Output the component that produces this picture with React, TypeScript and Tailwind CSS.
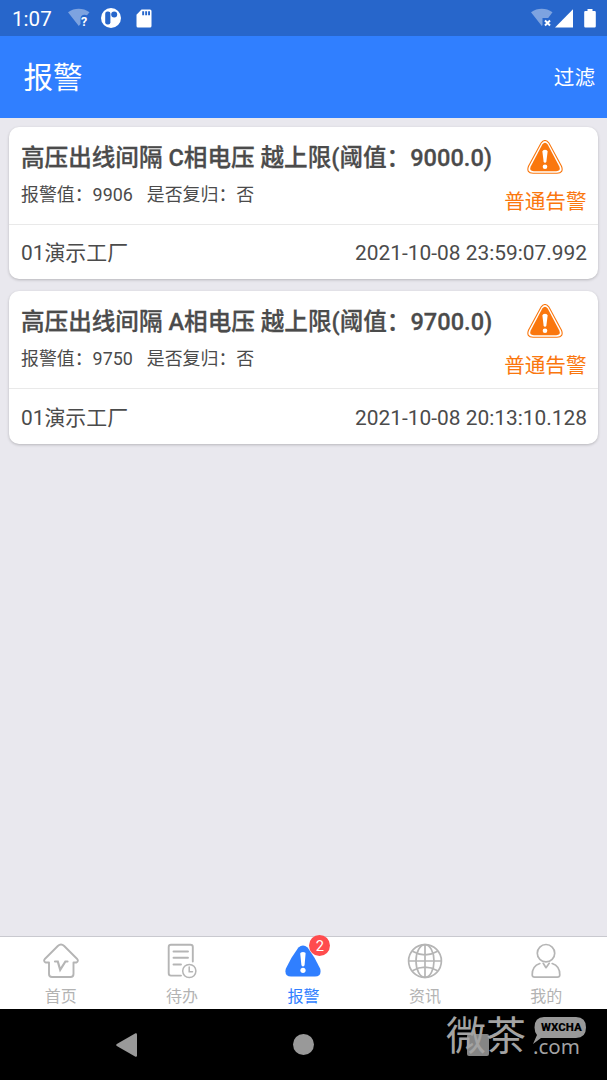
import clsx from "clsx";
import type { ReactNode } from "react";

const alarms = [
  {
    title: "高压出线间隔 C相电压 越上限(阈值：9000.0)",
    value: "9906",
    recovered: "否",
    level: "普通告警",
    site: "01演示工厂",
    time: "2021-10-08 23:59:07.992",
  },
  {
    title: "高压出线间隔 A相电压 越上限(阈值：9700.0)",
    value: "9750",
    recovered: "否",
    level: "普通告警",
    site: "01演示工厂",
    time: "2021-10-08 20:13:10.128",
  },
];

function StatusBar() {
  return (
    <div className="flex h-[36px] shrink-0 items-center bg-[#2766cb] pl-3 pr-[11px] text-white">
      <span className="w-[56px] pt-px text-[20.6px] leading-9">1:07</span>
      <svg className="h-[20px] w-[22px]" viewBox="0 0 22 20">
        <path d="M0 4.2C6.5-.4 15-.4 21.5 4.2L19 7.2Q13 5.5 12.5 11V16L10.8 18Z" fill="#7da3e0" />
        <text x="13" y="17.5" fontSize="12.5" fontWeight="700" fill="#fff">?</text>
      </svg>
      <svg className="ml-[11px] h-[20px] w-[20px]" viewBox="0 0 20 20">
        <circle cx="10" cy="10" r="10" fill="#fff" />
        <rect x="4.2" y="3.6" width="5.2" height="12.8" rx="2.2" fill="#2766cb" />
        <circle cx="13.2" cy="6.6" r="3" fill="#2766cb" />
      </svg>
      <svg className="ml-[15px] h-[19px] w-[16px]" viewBox="0 0 16 19">
        <path d="M5.5.5H14Q15.5.5 15.5 2V17Q15.5 18.5 14 18.5H2Q.5 18.5.5 17V5.7Z" fill="#fff" />
        <path d="M6.2 2.2h1.9v4H6.2zM9.2 2.2h1.9v4H9.2zM12.1 2.2H14v4h-1.9z" fill="#2766cb" />
      </svg>
      <div className="ml-auto flex items-center">
        <svg className="h-[20px] w-[22px]" viewBox="0 0 22 20">
          <path d="M0 4.2C6.5-.4 15-.4 21.5 4.2L17.2 10H11.5V17L10.8 18Z" fill="#7da3e0" />
          <path d="M14 12.5l5 5M19 12.5l-5 5" stroke="#fff" strokeWidth="2" />
        </svg>
        <svg className="ml-[2px] h-[19px] w-[18px]" viewBox="0 0 18 19">
          <path d="M18 .3V18.5H0Z" fill="#fff" />
        </svg>
        <svg className="ml-[11px] h-[19px] w-[12px]" viewBox="0 0 12 19">
          <path d="M3.5 0h5v2H10.7Q11.8 2 11.8 3.2V17.3Q11.8 18.6 10.6 18.6H1.4Q.2 18.6.2 17.3V3.2Q.2 2 1.4 2H3.5Z" fill="#fff" />
        </svg>
      </div>
    </div>
  );
}

function WarningIcon() {
  return (
    <svg className="h-[34px] w-[36px]" viewBox="0 0 36 34">
      <path d="M14.2 2.8Q18-1.8 21.8 2.8L34.5 26.2Q37 33 30 33.3H6Q-1 33 1.5 26.2Z" fill="#fff" stroke="#fa770e" strokeWidth="1.1" />
      <path d="M15.3 4.6Q18 1 20.7 4.6L32.3 26.6Q34.2 31.1 29.2 31.3H6.8Q1.8 31.1 3.7 26.6Z" fill="#fa770e" />
      <path d="M15.4 11.6Q15.5 9.8 18 9.8T20.6 11.6L19.4 21.5Q19.2 22.8 18 22.8T16.6 21.5Z" fill="#fff" />
      <circle cx="18" cy="26.7" r="2.3" fill="#fff" />
    </svg>
  );
}

function AlarmCard({ alarm }: { alarm: (typeof alarms)[number] }) {
  return (
    <section className="h-[152.4px] rounded-[10px] bg-white text-[#4b4b4b] shadow-[0_1px_3px_rgba(0,0,0,0.22)]">
      <div className="flex h-[97.6px] justify-between border-b border-[#e9e9e9] pl-[12px] pr-[11.5px]">
        <div className="whitespace-nowrap pt-[17px]">
          <h2 className="text-[23.6px] font-medium leading-[28px] [-webkit-text-stroke:0.3px_#4b4b4b]">{alarm.title}</h2>
          <p className="mt-[10px] flex gap-[14px] text-[17.9px] leading-[26px]">
            <span>报警值：{alarm.value}</span>
            <span>是否复归：{alarm.recovered}</span>
          </p>
        </div>
        <div className="flex flex-col items-center pt-[13px]">
          <WarningIcon />
          <span className="mt-[13.5px] text-[20.6px] leading-[28px] text-[#fa770e]">{alarm.level}</span>
        </div>
      </div>
      <div className="flex h-[55px] items-center justify-between pl-[12px] pr-[11px] pt-[4px] text-[20.9px]">
        <span>{alarm.site}</span>
        <span>{alarm.time}</span>
      </div>
    </section>
  );
}

function HomeIcon() {
  return (
    <svg className="h-[36px] w-[36px]" viewBox="0 0 36 36" fill="none" stroke="#b5b5b5" strokeWidth="1.9" strokeLinejoin="round" strokeLinecap="round">
      <path d="M6 19.5H2.5Q.2 18 1.8 16L14.8 3Q18-.2 21.2 3L34.2 16Q35.8 18 33.5 19.5H30.5V31Q30.5 34 27.5 34H9Q6 34 6 31Z" />
      <path d="M12 18.5H14.8L17.2 26.8L22.4 18.5H24.5" strokeWidth="2.2" strokeLinejoin="miter" />
    </svg>
  );
}

function TodoIcon() {
  return (
    <svg className="h-[36px] w-[36px]" viewBox="0 0 36 36" fill="none" stroke="#b5b5b5" strokeWidth="1.9" strokeLinecap="round">
      <path d="M17 32.6H7Q4.7 32.6 4.7 30.3V4Q4.7 1.7 7 1.7H26.5Q28.8 1.7 28.8 4V18.5M9.5 8.5H24M9.5 14.7H24M9.5 21.5H17" />
      <circle cx="25.3" cy="28" r="6.6" strokeWidth="1.5" />
      <path d="M25.2 24V28.8H28.5" strokeWidth="1.5" />
    </svg>
  );
}

function AlarmIcon() {
  return (
    <svg className="h-[36px] w-[36px]" viewBox="0 0 36 36">
      <path d="M13.4 4.6Q18 .2 22.6 4.6Q30 14.5 35.2 25.7Q37 33.2 30 33.5H6Q-1 33.2.8 25.7Q6 14.5 13.4 4.6Z" fill="#307fff" />
      <path d="M15.2 10.6Q15.2 8.9 18 8.9T20.6 10.6L19.6 22Q19.4 23.4 18 23.4T16.4 22Z" fill="#fff" />
      <circle cx="18" cy="27.3" r="2.6" fill="#fff" />
    </svg>
  );
}

function NewsIcon() {
  return (
    <svg className="h-[36px] w-[36px]" viewBox="0 0 36 36" fill="none" stroke="#b5b5b5" strokeWidth="1.7">
      <circle cx="18" cy="18" r="16.4" />
      <ellipse cx="18" cy="18" rx="9" ry="16.4" />
      <path d="M18 1.6V34.4M1.6 18H34.4M5.4 8.2Q18 15.4 30.6 8.2M5.4 27.8Q18 20.6 30.6 27.8" />
    </svg>
  );
}

function MineIcon() {
  return (
    <svg className="h-[36px] w-[36px]" viewBox="0 0 36 36" fill="none" stroke="#b5b5b5" strokeWidth="1.7" strokeLinecap="round" strokeLinejoin="round">
      <circle cx="18" cy="10.2" r="8.7" />
      <path d="M11.8 20.5Q4 23 4.2 32Q4.3 34.2 6.7 34.2H29.3Q31.7 34.2 31.8 32Q32 23 24.2 20.5M15.2 20.3L18 24.7L21.2 20.3" />
    </svg>
  );
}

const tabs: { label: string; icon: ReactNode; active?: boolean; badge?: number }[] = [
  { label: "首页", icon: <HomeIcon /> },
  { label: "待办", icon: <TodoIcon /> },
  { label: "报警", icon: <AlarmIcon />, active: true, badge: 2 },
  { label: "资讯", icon: <NewsIcon /> },
  { label: "我的", icon: <MineIcon /> },
];

function TabBar() {
  return (
    <nav className="grid h-[73px] shrink-0 grid-cols-5 border-t border-[#c9c9cf] bg-white">
      {tabs.map((tab) => (
        <div key={tab.label} className="flex flex-col items-center pt-[6px]">
          <div className="relative">
            {tab.icon}
            {tab.badge && (
              <span className="absolute -top-[8px] left-[24px] flex h-[21px] w-[21px] items-center justify-center rounded-full bg-[#ff4c4e] pt-px text-[14.7px] text-white">
                {tab.badge}
              </span>
            )}
          </div>
          <span className={clsx("mt-[6px] text-[16px] leading-[24px]", tab.active ? "text-[#307fff]" : "text-[#b3b3b3]")}>{tab.label}</span>
        </div>
      ))}
    </nav>
  );
}

function SystemNav() {
  return (
    <div className="relative h-[71px] shrink-0 bg-black">
      <div className="flex h-full items-center pl-[116px]">
        <svg className="h-[24px] w-[22px]" viewBox="0 0 22 24">
          <path d="M.8 11L19.5.3Q21 0 21 1.5V22.5Q21 24 19.5 23.7L.8 13Q-.4 12 .8 11Z" fill="#999" />
        </svg>
        <div className="ml-[155px] h-[21px] w-[21px] rounded-full bg-[#999]" />
        <div className="ml-[153px] h-[22px] w-[22px] rounded-[2px] bg-[#858585]" />
      </div>
      {/* watermark */}
      <div className="absolute left-[446px] top-0 flex h-[56px] text-[#a3a3a3]">
        <span className="w-[80px] text-[40px] leading-[56px]">微茶</span>
        <div className="relative ml-[7px] w-[55px]">
          <svg className="absolute left-0 top-[8px] h-[27px] w-[54px]" viewBox="0 0 54 27">
            <path d="M11 0H43Q53 0 53 10.5T43 21H8L0 27L4 18Q1.5 15 1.5 10.5Q1.5 0 11 0Z" fill="#999" />
          </svg>
          <span className="absolute left-[8px] top-[10px] text-[11.5px] font-black leading-[17px] text-black">WXCHA</span>
          <span className="absolute left-0 top-[24px] font-['Noto_Sans'] text-[20.5px] leading-[26px]">.com</span>
        </div>
      </div>
    </div>
  );
}

export default function App() {
  return (
    <div className="flex h-[1080px] w-[607px] flex-col overflow-hidden bg-[#e9e8ee] font-['Roboto','Noto_Sans_CJK_SC',sans-serif]">
      <StatusBar />
      <header className="flex h-[82px] shrink-0 items-center justify-between bg-[#307fff] pl-[23.5px] pr-[12px] pt-[3px] text-white">
        <h1 className="text-[29.5px] leading-none">报警</h1>
        <span className="text-[20.6px] leading-none">过滤</span>
      </header>
      <main className="flex flex-1 flex-col gap-[11.9px] px-[9px] pt-[9px]">
        {alarms.map((alarm) => (
          <AlarmCard key={alarm.time} alarm={alarm} />
        ))}
      </main>
      <TabBar />
      <SystemNav />
    </div>
  );
}
